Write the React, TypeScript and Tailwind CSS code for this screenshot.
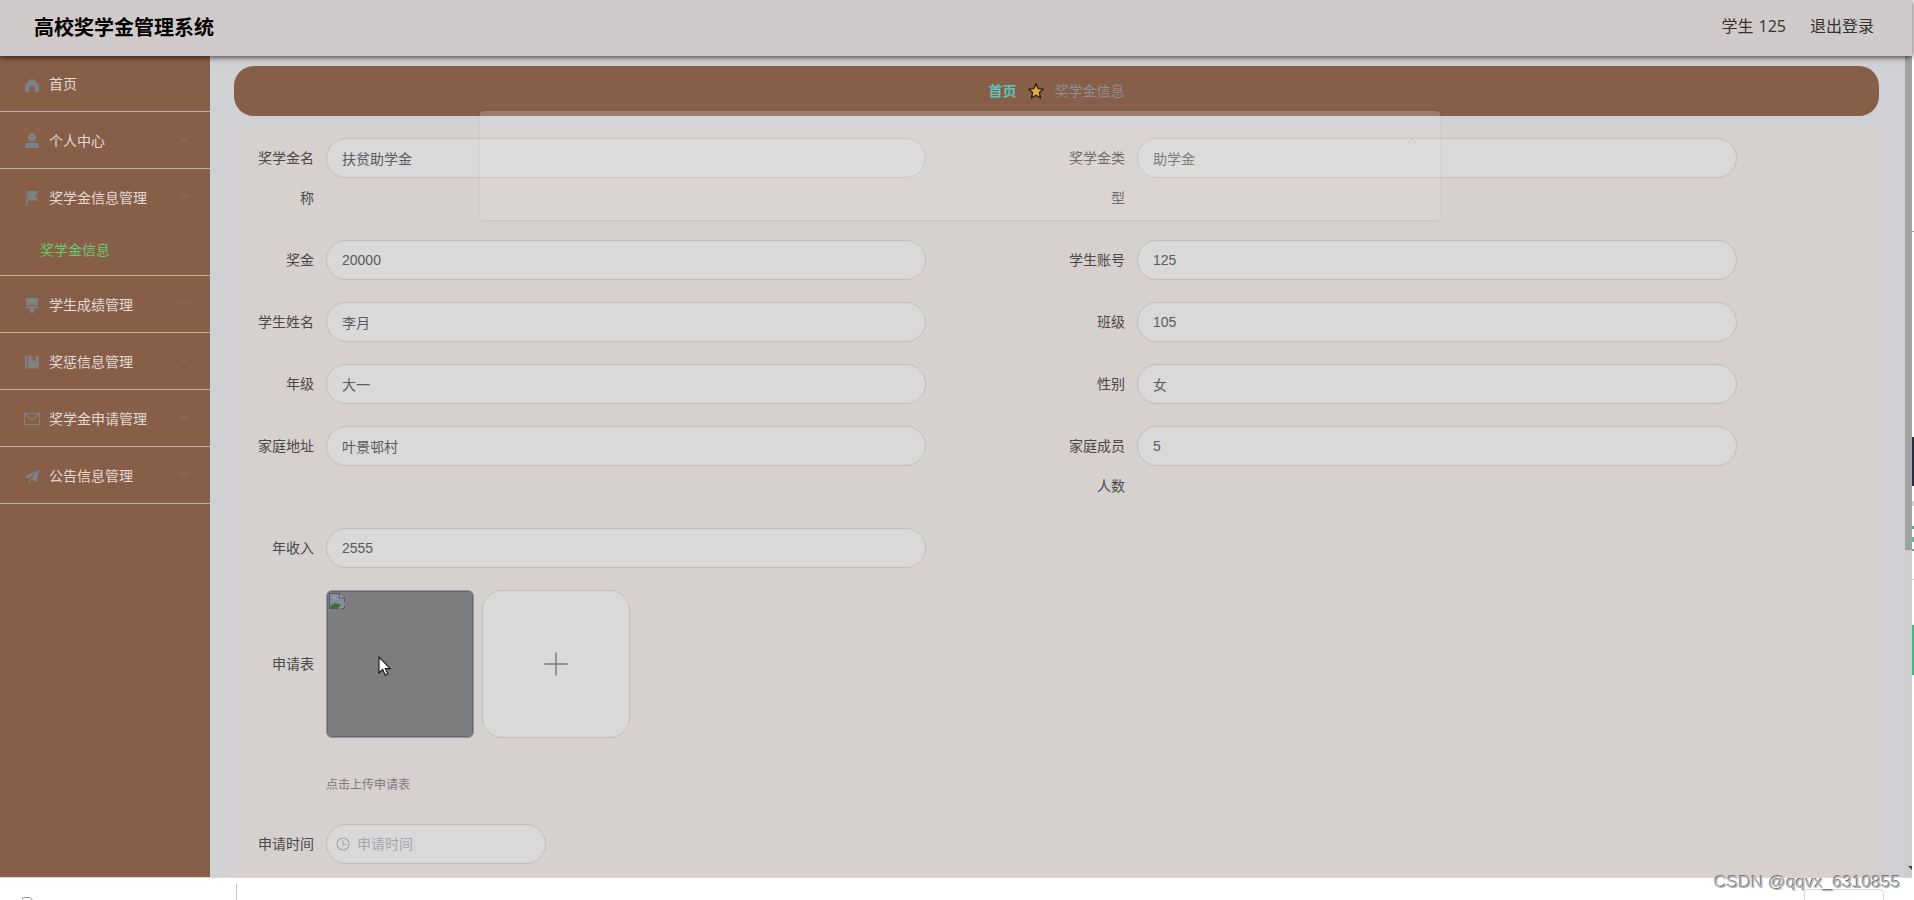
import type { ReactNode } from 'react';
import clsx from 'clsx';

interface MenuItem {
  title: string;
  icon: ReactNode;
  children?: string[];
  open?: boolean;
  leaf?: boolean;
}

interface Field {
  label: string;
  value: string;
}

const menu: MenuItem[] = [
  {
    title: '首页',
    leaf: true,
    icon: <path d="M9 2.6Q2 7.500 2 9.500V16h4.400v-3.200a2.600 2.600 0 0 1 5.200 0V16H16V9.500Q16 7.500 9 2.600z" />,
  },
  {
    title: '个人中心',
    icon: (
      <>
        <circle cx="9" cy="5.6" r="4.2" />
        <path d="M2 16v-1.8c0-2 1.4-3.2 3.3-3.2h7.4c1.9 0 3.3 1.2 3.3 3.2V16z" />
      </>
    ),
  },
  {
    title: '奖学金信息管理',
    open: true,
    children: ['奖学金信息'],
    icon: <path d="M3 1.5h1.4v15.2H3zM5 2h10.6l-2.8 4.6 2.8 4.8H5z" />,
  },
  {
    title: '学生成绩管理',
    icon: <path d="M3.2 2h11.6v7.2H3.2zM3.2 10.200h11.600v1.600l-1.400.8H11v3.400l-2 1.400-2-1.400v-3.400H4.600l-1.400-.8z" />,
  },
  {
    title: '奖惩信息管理',
    icon: <path d="M2 2.4h2.2v13.2H2zM5.2 2.4h4.2v6l1.6-1.3 1.6 1.3v-6H16v13.2H5.2z" />,
  },
  {
    title: '奖学金申请管理',
    icon: (
      <path
        d="M1.5 3.2h15v11.6h-15zM1.8 3.8 9 10l7.2-6.2"
        fill="none"
        stroke="currentColor"
        strokeWidth="1.1"
      />
    ),
  },
  {
    title: '公告信息管理',
    icon: <path d="M16.6 2.2 1.6 9.8l4 1.8 8-6.6-6 7.4 5.8 2.4zM6.2 12.8v3.8l2.4-2.6z" />,
  },
];

const rows: Field[][] = [
  [
    { label: '奖学金名称', value: '扶贫助学金' },
    { label: '奖学金类型', value: '助学金' },
  ],
  [
    { label: '奖金', value: '20000' },
    { label: '学生账号', value: '125' },
  ],
  [
    { label: '学生姓名', value: '李月' },
    { label: '班级', value: '105' },
  ],
  [
    { label: '年级', value: '大一' },
    { label: '性别', value: '女' },
  ],
  [
    { label: '家庭地址', value: '叶景邨村' },
    { label: '家庭成员人数', value: '5' },
  ],
  [{ label: '年收入', value: '2555' }],
];

function Chevron({ up }: { up?: boolean }) {
  return (
    <svg
      viewBox="0 0 12 12"
      className={clsx('mb-[3px] h-3 w-3 text-[#967664]', up && 'rotate-180')}
      fill="none"
      stroke="currentColor"
    >
      <path d="M1.5 4 6 8.2 10.5 4" />
    </svg>
  );
}

function Header() {
  return (
    <header className="relative z-10 flex h-14 shrink-0 items-center justify-between bg-[#d0caca] pr-[38px] pb-[3px] pl-[34px] shadow-[0_1px_6px_rgba(0,0,0,0.75)]">
      <h1 className="text-[20px] font-bold text-black">高校奖学金管理系统</h1>
      <div className="flex gap-6 pb-0.5 font-['Open_Sans','Noto_Sans_CJK_SC',sans-serif] text-base text-[#333] [word-spacing:1px]">
        <span>学生 125</span>
        <span>退出登录</span>
      </div>
    </header>
  );
}

function Sidebar() {
  return (
    <aside className="w-[210px] shrink-0 bg-[#875e48] text-sm text-[#e2dad6]">
      <ul>
        {menu.map((item) => (
          <li key={item.title} className="border-b border-[#bfb0a6]">
            <div
              className={clsx(
                'flex items-center pr-5 pl-[23px]',
                item.leaf ? 'h-[55px]' : 'h-14'
              )}
            >
              <svg viewBox="0 0 18 18" className="mt-0.5 mr-2 h-[18px] w-[18px] text-[#7e8286]" fill="currentColor">
                {item.icon}
              </svg>
              <span className={clsx('flex-1', item.leaf && 'pb-0.5')}>{item.title}</span>
              {!item.leaf && <Chevron up={item.open} />}
            </div>
            {item.children?.map((child) => (
              <div key={child} className="flex h-[50px] items-center pb-0.5 pl-10 text-[#6cc96c]">
                {child}
              </div>
            ))}
          </li>
        ))}
      </ul>
    </aside>
  );
}

function Breadcrumb() {
  return (
    <nav className="flex h-[50px] items-center justify-center rounded-[20px] bg-[#875e48] pb-0.5 text-sm">
      <span className="font-bold text-[#62c3ba]">首页</span>
      <svg viewBox="0 0 16 16" className="mx-[11px] mt-0.5 h-4 w-4" fill="#e2ae33" stroke="#2a1c12" strokeWidth="1.3" strokeLinejoin="round">
        <path d="m8 .8 2.100 4.800 5.200.5-3.900 3.500 1.200 5.400L8 12.200l-4.600 2.800 1.200-5.400L.7 6.100l5.200-.5z" />
      </svg>
      <span className="text-[#8f8f97]">奖学金信息</span>
    </nav>
  );
}

function FormItem({ label, children, tall }: { label: string; children: ReactNode; tall?: boolean }) {
  return (
    <div className="mb-[22px] flex w-[811px] text-sm">
      <label
        className={clsx(
          '-mt-px w-20 pr-3 pb-px text-right text-[#48494b]',
          tall ? 'leading-[148px]' : 'leading-10'
        )}
      >
        {label}
      </label>
      {children}
    </div>
  );
}

function ScholarshipForm() {
  return (
    <form className="flex-1 bg-[#d6d0cf] pt-2.5 pl-3">
      {rows.map((row) => (
        <div key={row[0].label} className="flex">
          {row.map((field) => (
            <FormItem key={field.label} label={field.label}>
              <input
                readOnly
                value={field.value}
                className="h-10 w-[600px] rounded-[20px] border border-[#bbbfc4] bg-[#d9d9d9] px-[15px] font-['Liberation_Sans','Noto_Sans_CJK_SC',sans-serif] text-[#5a5b5e] outline-none"
              />
            </FormItem>
          ))}
        </div>
      ))}

      <FormItem label="申请表" tall>
        <div className="h-[212px]">
          <div className="flex gap-2">
            <div className="h-[148px] w-[148px] rounded-md border border-[#8c98a4] bg-[#7d7d7d] p-0.5 shadow-[inset_0_0_0_1px_#656a72]">
              <svg viewBox="0 0 16 16" className="h-4 w-4">
                <path d="M.5.5h10L15.500 5v10.500H.5z" fill="#858c9c" stroke="#555960" />
                <path d="M3 5.500c0-1.500 2-2 2.600-1 1-.6 2 .2 1.800 1z" fill="#a6a9ae" />
                <path d="M1 15c1-4 5-6 9-4l2 1-3 3z" fill="#3f6f30" />
                <path d="m9 15.800 7-6.500v2.500l-4 4z" fill="#8f9292" />
                <path d="M10.500.5V5h5" fill="#9c9da0" stroke="#555960" />
              </svg>
            </div>
            <div className="flex h-[148px] w-[148px] items-center justify-center rounded-[20px] border border-[#bbbfc4] bg-[#d9d9d9]">
              <svg viewBox="0 0 24 24" className="-mt-px h-6 w-6" stroke="#7d7e80" strokeWidth="1.5">
                <path d="M12 .5v23M.5 12h23" />
              </svg>
            </div>
          </div>
          <p className="mt-[37px] text-xs leading-[18px] text-[#777c86]">点击上传申请表</p>
        </div>
      </FormItem>

      <FormItem label="申请时间">
        <div className="flex h-10 w-[220px] items-center rounded-[20px] border border-[#bbbfc4] bg-[#d9d9d9] pl-[9px] text-[#a3a6ab]">
          <svg viewBox="0 0 14 14" className="mr-[7px] h-3.5 w-3.5" fill="none" stroke="currentColor" strokeWidth="1.1">
            <circle cx="7" cy="7" r="6" />
            <path d="M7 3.500V7.500h3.500" />
          </svg>
          <span className="pb-0.5">申请时间</span>
        </div>
      </FormItem>
    </form>
  );
}

function FadingDialog() {
  return (
    <div className="absolute top-[111px] left-[480px] z-20 flex h-[109px] w-[960px] justify-end rounded-sm bg-[rgba(228,231,225,0.24)] pt-[22px] pr-[22px] shadow-[0_1px_3px_rgba(0,0,0,0.06)]">
      <svg viewBox="0 0 12 12" className="h-3 w-3" stroke="#c3c4c4">
        <path d="m1.500 1.500 9 9m0-9-9 9" />
      </svg>
    </div>
  );
}

function EdgeStrip() {
  return (
    <div className="flex w-0.5 shrink-0 flex-col bg-white">
      <div className="mt-[231px] h-px bg-[#8fa89c]" />
      <div className="mt-[205px] h-[49px] bg-[#263040]" />
      <div className="mt-[15px] h-[5px] bg-[#d4d4d4]" />
      <div className="mt-5 h-[3px] bg-[#45b883]" />
      <div className="mt-2 h-[5px] bg-[#5cbf92]" />
      <div className="mt-[7px] h-0.5 bg-[#45b883]" />
      <div className="mt-[28px] h-px bg-[#cfcfcf]" />
      <div className="mt-[45px] h-[50px] bg-[#42b983]" />
    </div>
  );
}

function DownloadBar() {
  return (
    <footer className="flex h-[22px] shrink-0 justify-between overflow-hidden bg-white pr-7">
      <div className="flex w-[237px] justify-between">
        <svg viewBox="0 0 12 16" className="mt-[19px] ml-[22px] h-4 w-3" fill="none" stroke="#8d9691">
          <path d="M.5 15.500V1.500q0-1 1-1H8l3.500 3.500v11.500z" />
        </svg>
        <div className="mt-1.5 w-px bg-[#c4c4c4]" />
      </div>
      <div className="mt-[11px] h-8 w-20 rounded-[4px] border border-[#d5d7da]" />
    </footer>
  );
}

export default function App() {
  return (
    <div className="relative flex h-[900px] w-[1914px] overflow-hidden bg-white font-['Noto_Sans_CJK_SC',sans-serif]">
      <div className="flex w-[1912px] shrink-0 flex-col">
        <Header />
        <div className="flex min-h-0 flex-1 border-b border-[#d9d7d6]">
          <Sidebar />
          <main className="flex min-h-0 flex-1 flex-col overflow-hidden bg-[#cfd1d4] pt-2.5 pr-[26px] pl-6">
            <Breadcrumb />
            <div className="mt-3 flex min-h-0 flex-1">
              <ScholarshipForm />
            </div>
          </main>
          <div className="flex w-[7px] shrink-0 flex-col items-end justify-between bg-[#cdcdcd] pb-[7px]">
            <div className="h-[494px] w-full bg-[#a2a2a2]" />
            <svg viewBox="0 0 4 4" className="h-1 w-1" fill="#444">
              <path d="M0 0h4v4z" />
            </svg>
          </div>
        </div>
        <DownloadBar />
      </div>
      <EdgeStrip />
      <FadingDialog />

      <svg viewBox="0 0 14 20" className="absolute top-[656px] left-[378px] h-5 w-3.5" fill="#fff" stroke="#111" strokeWidth="1.1">
        <path d="M1 1v16l3.700-3.500 2.600 5.500 2.500-1.200-2.500-5.200h5z" />
      </svg>
      <span className="absolute top-[870px] right-[13px] z-20 font-['Liberation_Sans',sans-serif] text-[17.3px] tracking-[0.1px] text-[#b9b9b9] [text-shadow:-1px_-1px_0_#777,1px_1px_1px_#fff]">
        CSDN @qqvx_6310855
      </span>
    </div>
  );
}
